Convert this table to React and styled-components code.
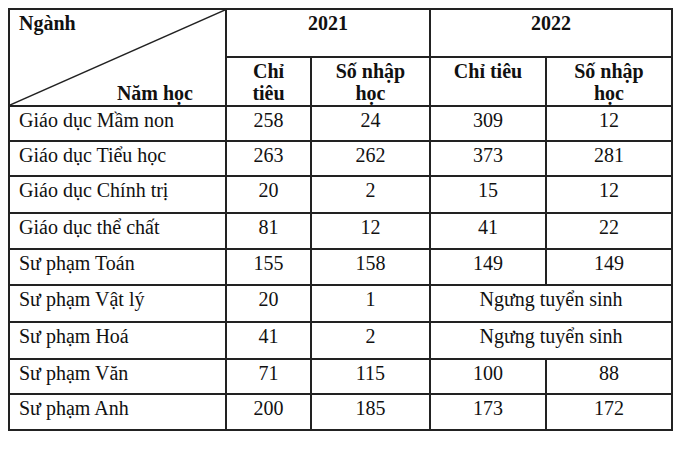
import React from 'react';
import styled, { createGlobalStyle } from 'styled-components';

const GlobalStyle = createGlobalStyle`
  html, body {
    margin: 0;
    padding: 0;
    background: #ffffff;
  }
  body {
    font-family: "Liberation Serif", "Times New Roman", serif;
    color: #111111;
  }
`;

const Page = styled.div`
  padding: 8px 0 0 8px;
`;

const Table = styled.table`
  border-collapse: collapse;
  table-layout: fixed;
  width: 665px;
  font-size: 20px;
  line-height: 22px;
  border: 2px solid #222;
`;

const Row = styled.tr`
  height: ${({ $h }) => $h}px;
`;

const Cell = styled.td`
  border: 2px solid #222;
  padding: 2px 0 0;
  vertical-align: top;
  text-align: ${({ $left }) => ($left ? 'left' : 'center')};
  padding-left: ${({ $left }) => ($left ? '9px' : '0')};
  font-weight: ${({ $bold }) => ($bold ? 700 : 400)};
  white-space: nowrap;
`;

const CornerCell = styled.td`
  border: 2px solid #222;
  padding: 0;
  vertical-align: top;
  font-weight: 700;
`;

const Corner = styled.div`
  position: relative;
  height: 95px;
  display: flex;
  flex-direction: column;
  justify-content: space-between;
`;

const Diagonal = styled.svg`
  position: absolute;
  inset: 0;
  width: 100%;
  height: 100%;
`;

const CornerTop = styled.span`
  padding: 2px 0 0 9px;
`;

const CornerBottom = styled.span`
  align-self: flex-end;
  padding: 0 32px 1px 0;
`;

const rows = [
  ['Giáo dục Mầm non', '258', '24', '309', '12'],
  ['Giáo dục Tiểu học', '263', '262', '373', '281'],
  ['Giáo dục Chính trị', '20', '2', '15', '12'],
  ['Giáo dục thể chất', '81', '12', '41', '22'],
  ['Sư phạm Toán', '155', '158', '149', '149'],
  ['Sư phạm Vật lý', '20', '1', null, null],
  ['Sư phạm Hoá', '41', '2', null, null],
  ['Sư phạm Văn', '71', '115', '100', '88'],
  ['Sư phạm Anh', '200', '185', '173', '172'],
];

const heights = [35, 35, 37, 36, 36, 37, 37, 35, 36];

export default function App() {
  return (
    <Page>
      <GlobalStyle />
      <Table>
        <colgroup>
          <col style={{ width: 217 }} />
          <col style={{ width: 85 }} />
          <col style={{ width: 119 }} />
          <col style={{ width: 116 }} />
          <col style={{ width: 126 }} />
        </colgroup>
        <tbody>
          <Row $h={48}>
            <CornerCell rowSpan={2}>
              <Corner>
                <Diagonal viewBox="0 0 100 100" preserveAspectRatio="none">
                  <line x1="0" y1="100" x2="100" y2="0" stroke="#222" strokeWidth="1.5" vectorEffect="non-scaling-stroke" />
                </Diagonal>
                <CornerTop>Ngành</CornerTop>
                <CornerBottom>Năm học</CornerBottom>
              </Corner>
            </CornerCell>
            <Cell colSpan={2} $bold>2021</Cell>
            <Cell colSpan={2} $bold>2022</Cell>
          </Row>
          <Row $h={49}>
            <Cell $bold>Chỉ<br />tiêu</Cell>
            <Cell $bold>Số nhập<br />học</Cell>
            <Cell $bold>Chỉ tiêu</Cell>
            <Cell $bold>Số nhập<br />học</Cell>
          </Row>
          {rows.map((r, i) => (
            <Row key={r[0]} $h={heights[i]}>
              <Cell $left>{r[0]}</Cell>
              <Cell>{r[1]}</Cell>
              <Cell>{r[2]}</Cell>
              {r[3] === null ? (
                <Cell colSpan={2}>Ngưng tuyển sinh</Cell>
              ) : (
                <>
                  <Cell>{r[3]}</Cell>
                  <Cell>{r[4]}</Cell>
                </>
              )}
            </Row>
          ))}
        </tbody>
      </Table>
    </Page>
  );
}
